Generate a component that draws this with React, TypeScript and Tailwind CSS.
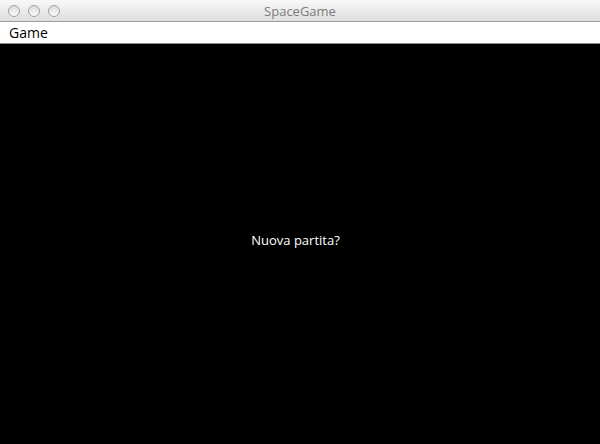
export default function App() {
  return (
    <div className="flex min-h-screen flex-col bg-white font-['Open_Sans','Lucida_Grande',sans-serif]">
      <header className="grid h-[22px] grid-cols-[60px_1fr_60px] items-center rounded-t-[4px] border-b border-[#9c9c9c] bg-linear-to-b from-[#f8f8f8] to-[#dedede]">
        <div className="flex gap-2 pl-2">
          <button aria-label="Close" className="size-3 rounded-full border border-[#a0a0a0] bg-linear-to-b from-[#dcdcdc] to-[#fafafa]" />
          <button aria-label="Minimize" className="size-3 rounded-full border border-[#a0a0a0] bg-linear-to-b from-[#dcdcdc] to-[#fafafa]" />
          <button aria-label="Zoom" className="size-3 rounded-full border border-[#a0a0a0] bg-linear-to-b from-[#dcdcdc] to-[#fafafa]" />
        </div>
        <h1 className="text-center text-[13px] leading-5 text-[#7c7c7c]">SpaceGame</h1>
      </header>
      <nav className="flex h-[22px] items-center border-b border-[#8c8c8c] bg-white px-[9px]">
        <button className="text-[14px] leading-5 text-black">Game</button>
      </nav>
      <main className="flex flex-1 items-center justify-center bg-black pr-[9px] pb-[9px]">
        <p className="text-[13px] leading-5 text-white">Nuova partita?</p>
      </main>
    </div>
  );
}
